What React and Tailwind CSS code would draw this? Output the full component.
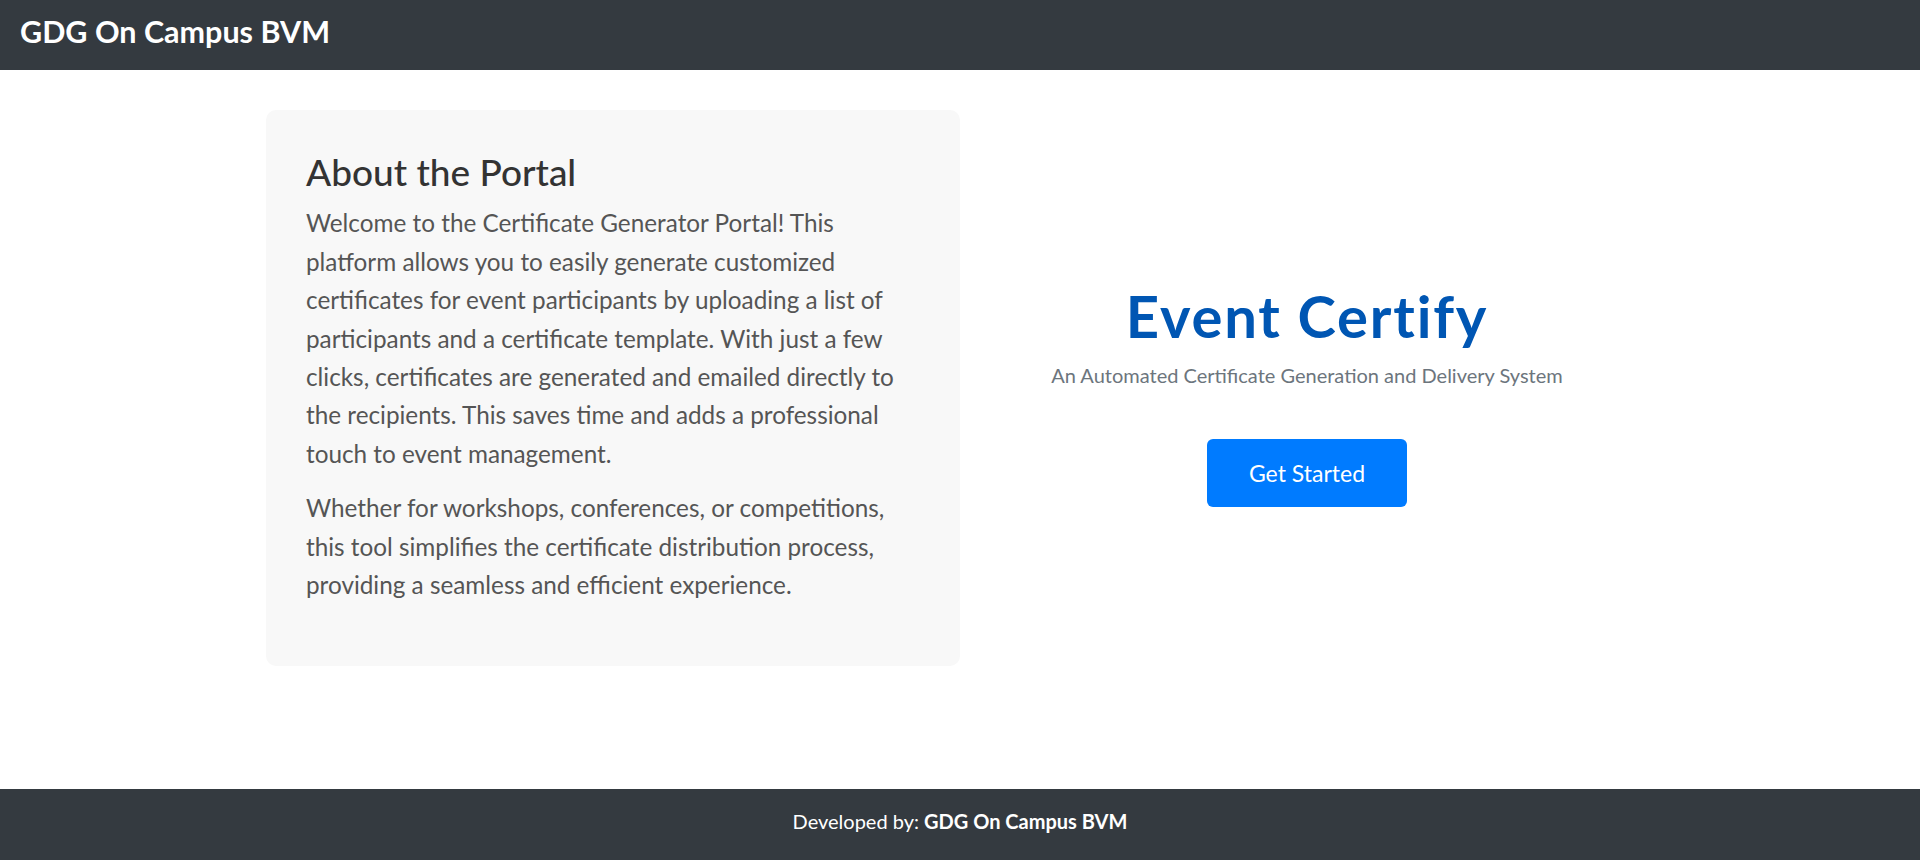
export default function App() {
  return (
    <div className="flex h-screen flex-col bg-white" style={{ fontFamily: 'Lato, "Open Sans", sans-serif' }}>
      <header className="flex h-[70px] shrink-0 items-center bg-[#343a40] pb-[7px] pl-5">
        <span className="text-[30.5px] font-bold leading-[1.2] text-white">GDG On Campus BVM</span>
      </header>

      <main className="flex-1">
        <div className="mx-auto mt-10 flex w-[1388px] items-center">
          <section className="w-1/2 rounded-[10px] bg-[#f8f8f8] px-10 pb-[46px] pt-10">
            <h2 className="mb-[10px] text-[37px] font-medium leading-[1.2] text-[#333333]">About the Portal</h2>
            <p className="mb-4 text-[24.3px] leading-[38.4px] text-[#555555]">
              Welcome to the Certificate Generator Portal! This platform allows you to easily generate customized
              certificates for event participants by uploading a list of participants and a certificate template. With
              just a few clicks, certificates are generated and emailed directly to the recipients. This saves time and
              adds a professional touch to event management.
            </p>
            <p className="mb-4 text-[24.3px] leading-[38.4px] text-[#555555]">
              Whether for workshops, conferences, or competitions, this tool simplifies the certificate distribution
              process, providing a seamless and efficient experience.
            </p>
          </section>

          <section className="flex w-1/2 flex-col items-center pt-[7px] text-center">
            <h1 className="mt-[5px] text-[58px] font-bold leading-[1.2] tracking-[1.8px] text-[#0056b3]">Event Certify</h1>
            <p className="mt-[9px] text-[20px] leading-[30px] text-[#6c757d]">
              An Automated Certificate Generation and Delivery System
            </p>
            <button className="mt-[49px] rounded-[6px] bg-[#007bff] px-[42px] py-4 text-[23px] leading-9 text-white">
              Get Started
            </button>
          </section>
        </div>
      </main>

      <footer className="flex h-[71px] shrink-0 items-center justify-center bg-[#343a40] pb-2 text-[20px] leading-[1.2] text-white">
        <span>
          Developed by: <strong className="font-bold">GDG On Campus BVM</strong>
        </span>
      </footer>
    </div>
  );
}
